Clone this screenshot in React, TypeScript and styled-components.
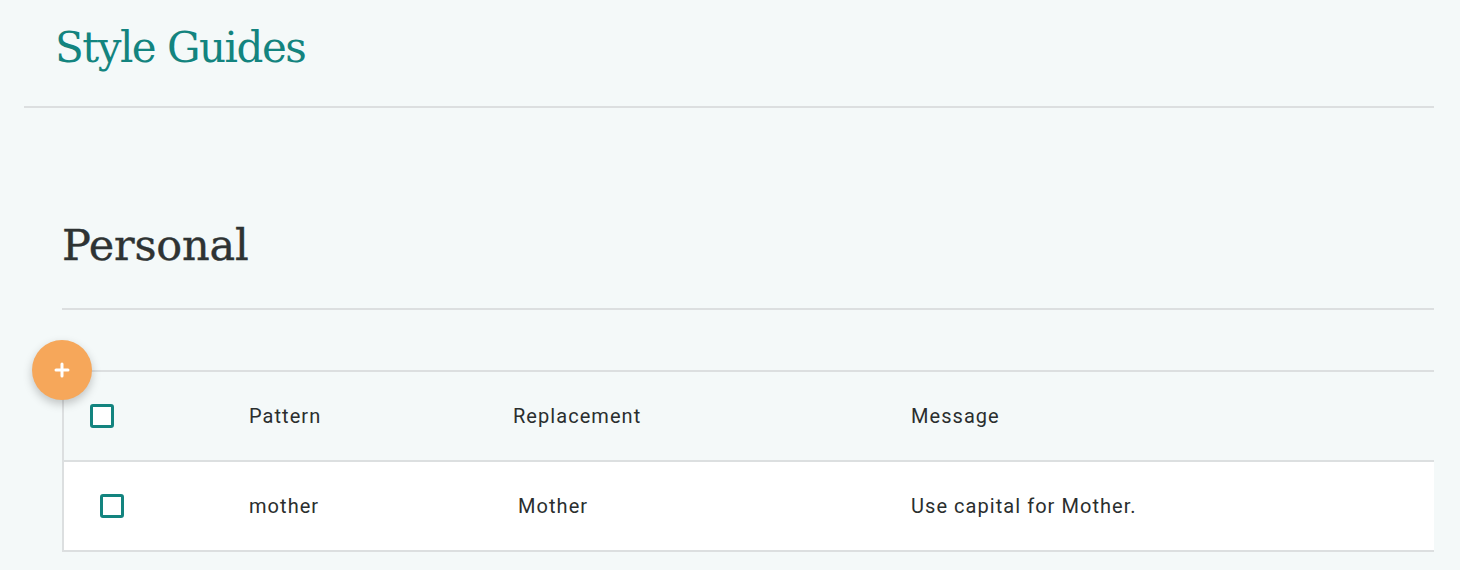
import React from "react";
import styled, { createGlobalStyle } from "styled-components";

const Global = createGlobalStyle`
  html, body { margin: 0; padding: 0; background: #f4f9f9; }
  body { font-family: "Roboto", "Noto Sans", sans-serif; }
`;

const Page = styled.div`
  width: 1460px;
  height: 570px;
  background: #f4f9f9;
  overflow: hidden;
  padding-right: 26px;
  box-sizing: border-box;
`;

const Header = styled.header`
  margin-left: 24px;
  height: 106px;
  border-bottom: 2px solid #dcdfe0;
  padding-left: 31px;
  box-sizing: content-box;
  display: flex;
  align-items: flex-start;
`;

const Title = styled.h1`
  margin: 0;
  padding-top: 19px;
  font-family: "DejaVu Serif", "Liberation Serif", serif;
  font-weight: 300;
  font-size: 42px;
  line-height: 58px;
  color: #13847f;
  letter-spacing: -1.5px;
`;

const Section = styled.section`
  margin-left: 62px;
  padding-top: 108px;
`;

const SectionTitle = styled.h2`
  margin: 0;
  height: 92px;
  border-bottom: 2px solid #dcdfe0;
  font-family: "DejaVu Serif", "Liberation Serif", serif;
  font-weight: 400;
  font-size: 43px;
  line-height: 58px;
  color: #2e3333;
  letter-spacing: -0.2px;
  -webkit-text-stroke: 0.4px #2e3333;
`;

const TableWrap = styled.div`
  position: relative;
  margin-top: 60px;
`;

const Fab = styled.button`
  position: absolute;
  left: -30px;
  top: -30px;
  width: 60px;
  height: 60px;
  border-radius: 50%;
  border: none;
  background: #f6a75a;
  box-shadow: 0 4px 10px rgba(0, 0, 0, 0.22);
  display: flex;
  align-items: center;
  justify-content: center;
  padding: 0;
  z-index: 2;
`;

const Table = styled.div`
  border-top: 2px solid #dcdfe0;
  border-left: 2px solid #dcdfe0;
`;

const Row = styled.div<{ $body?: boolean }>`
  display: grid;
  grid-template-columns: 185px 264px 398px 1fr;
  height: 88px;
  align-items: center;
  background: ${(p) => (p.$body ? "#ffffff" : "transparent")};
  border-bottom: 2px solid #dcdfe0;
  font-size: 20px;
  letter-spacing: 1.05px;
  color: #2a2e2e;
`;

const Cell = styled.div<{ $shift?: number }>`
  padding-left: ${(p) => p.$shift ?? 0}px;
  white-space: nowrap;
`;

const Check = styled.span<{ $offset: number }>`
  display: block;
  margin-left: ${(p) => p.$offset}px;
  width: 24px;
  height: 24px;
  box-sizing: border-box;
  border: 3.5px solid #13847f;
  border-radius: 3px;
  background: #fff;
`;

export default function App() {
  return (
    <Page>
      <Global />
      <Header>
        <Title>Style Guides</Title>
      </Header>
      <Section>
        <SectionTitle>Personal</SectionTitle>
        <TableWrap>
          <Fab aria-label="Add">
            <svg width="16" height="16" viewBox="0 0 16 16">
              <path d="M8 2v12M2 8h12" stroke="#fff" strokeWidth="3" strokeLinecap="round" />
            </svg>
          </Fab>
          <Table>
            <Row>
              <Cell><Check $offset={26} /></Cell>
              <Cell>Pattern</Cell>
              <Cell>Replacement</Cell>
              <Cell>Message</Cell>
            </Row>
            <Row $body>
              <Cell><Check $offset={36} /></Cell>
              <Cell>mother</Cell>
              <Cell $shift={5}>Mother</Cell>
              <Cell>Use capital for Mother.</Cell>
            </Row>
          </Table>
        </TableWrap>
      </Section>
    </Page>
  );
}
